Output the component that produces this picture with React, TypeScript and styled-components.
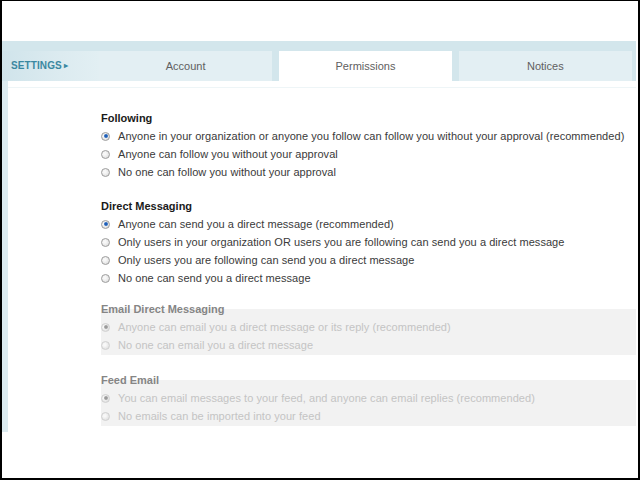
import { FC } from "react";
import styled, { createGlobalStyle, css } from "styled-components";

interface IOption {
  label: string;
  checked?: boolean;
}

interface ISection {
  title: string;
  disabled?: boolean;
  options: IOption[];
}

const sections: ISection[] = [
  {
    title: "Following",
    options: [
      {
        label:
          "Anyone in your organization or anyone you follow can follow you without your approval (recommended)",
        checked: true,
      },
      { label: "Anyone can follow you without your approval" },
      { label: "No one can follow you without your approval" },
    ],
  },
  {
    title: "Direct Messaging",
    options: [
      { label: "Anyone can send you a direct message (recommended)", checked: true },
      {
        label:
          "Only users in your organization OR users you are following can send you a direct message",
      },
      { label: "Only users you are following can send you a direct message" },
      { label: "No one can send you a direct message" },
    ],
  },
  {
    title: "Email Direct Messaging",
    disabled: true,
    options: [
      {
        label: "Anyone can email you a direct message or its reply (recommended)",
        checked: true,
      },
      { label: "No one can email you a direct message" },
    ],
  },
  {
    title: "Feed Email",
    disabled: true,
    options: [
      {
        label:
          "You can email messages to your feed, and anyone can email replies (recommended)",
        checked: true,
      },
      { label: "No emails can be imported into your feed" },
    ],
  },
];

const tabs = ["Account", "Permissions", "Notices"];
const activeTab = "Permissions";

const App: FC = () => {
  return (
    <>
      <GlobalStyle />
      <Frame>
        <Panel>
          <TabBar>
            <SettingsLabel>
              SETTINGS <Arrow>&#9656;</Arrow>
            </SettingsLabel>
            <TabList>
              {tabs.map((tab) => (
                <Tab key={tab} active={tab === activeTab}>
                  {tab}
                </Tab>
              ))}
            </TabList>
          </TabBar>
          <Content>
            {sections.map((section) => (
              <Section key={section.title} disabled={section.disabled}>
                <SectionTitle disabled={section.disabled}>{section.title}</SectionTitle>
                {section.options.map((option) => (
                  <OptionRow key={option.label} disabled={section.disabled}>
                    <Radio checked={!!option.checked} disabled={section.disabled} />
                    {option.label}
                  </OptionRow>
                ))}
              </Section>
            ))}
          </Content>
        </Panel>
      </Frame>
    </>
  );
};

export default App;

const GlobalStyle = createGlobalStyle`
  html, body {
    margin: 0;
    padding: 0;
    background: #ffffff;
  }
  body {
    font-family: "Liberation Sans", Arial, sans-serif;
    font-size: 11px;
  }
`;

const Frame = styled.div`
  box-sizing: border-box;
  width: 640px;
  height: 480px;
  border: 2px solid #000;
  border-top-width: 1px;
  padding-top: 40px;
  background: #fff;
  overflow: hidden;
`;

const Panel = styled.div`
  width: 634px;
`;

const TabBar = styled.div`
  display: flex;
  height: 40px;
  padding-top: 10px;
  box-sizing: border-box;
  background: #d3e6ec;
`;

const SettingsLabel = styled.div`
  width: 97px;
  display: flex;
  align-items: center;
  padding: 0 0 1px 9px;
  box-sizing: border-box;
  background: linear-gradient(to right, #d0e4eb 0%, #dcebf0 60%, #e2eff3 100%);
  color: #3a88a1;
  font-size: 10px;
  font-weight: bold;
  letter-spacing: 0.1px;
`;

const Arrow = styled.span`
  margin-left: 2px;
  font-size: 8px;
`;

const TabList = styled.div`
  flex: 1;
  display: flex;
  gap: 6.5px;
  padding-right: 4px;
`;

const Tab = styled.div<{ active: boolean }>`
  flex: 1;
  display: flex;
  align-items: center;
  justify-content: center;
  padding-bottom: 1px;
  background: #e3eff3;
  color: #606060;
  font-size: 11px;
  ${({ active }) =>
    active &&
    css`
      background: #ffffff;
    `}
`;

const Content = styled.div`
  height: 351px;
  box-sizing: border-box;
  border-left: 6px solid #dcebf0;
  padding: 28px 0 0 93px;
  position: relative;

  &::before {
    content: "";
    position: absolute;
    left: 0;
    right: 0;
    top: 6px;
    border-top: 1px solid #eef5f7;
  }
`;

const Section = styled.section<{ disabled?: boolean }>`
  margin-bottom: 13px;
  &:first-child {
    margin-bottom: 16px;
  }
  ${({ disabled }) =>
    disabled &&
    css`
      margin-bottom: 16px;
      padding-bottom: 1px;
      background: linear-gradient(to bottom, transparent 9px, #f2f2f2 9px);
    `}
`;

const SectionTitle = styled.h3<{ disabled?: boolean }>`
  margin: 0;
  height: 18px;
  line-height: 18px;
  font-size: 11px;
  font-weight: bold;
  color: ${({ disabled }) => (disabled ? "#858585" : "#1a1a1a")};
`;

const OptionRow = styled.label<{ disabled?: boolean }>`
  display: flex;
  align-items: center;
  height: 18px;
  white-space: nowrap;
  letter-spacing: 0.05px;
  color: ${({ disabled }) => (disabled ? "#c4c4c4" : "#3a3a3a")};
`;

const Radio = styled.span<{ checked: boolean; disabled?: boolean }>`
  position: relative;
  flex: none;
  width: 9px;
  height: 9px;
  margin: 0 8px 0 0;
  border-radius: 50%;
  box-sizing: border-box;
  border: 1px solid ${({ disabled }) => (disabled ? "#d0d0d0" : "#9d9d9d")};
  background: radial-gradient(circle at 40% 40%, #f8f8f8 20%, #d6d6d6 100%);

  &::after {
    content: "";
    display: ${({ checked }) => (checked ? "block" : "none")};
    position: absolute;
    left: 1.5px;
    top: 1.5px;
    width: 4px;
    height: 4px;
    border-radius: 50%;
    background: ${({ disabled }) =>
      disabled
        ? "radial-gradient(circle, #9a9a9a 40%, #bdbdbd 100%)"
        : "radial-gradient(circle, #1f5fb8 40%, #5b8fd0 100%)"};
  }
`;
